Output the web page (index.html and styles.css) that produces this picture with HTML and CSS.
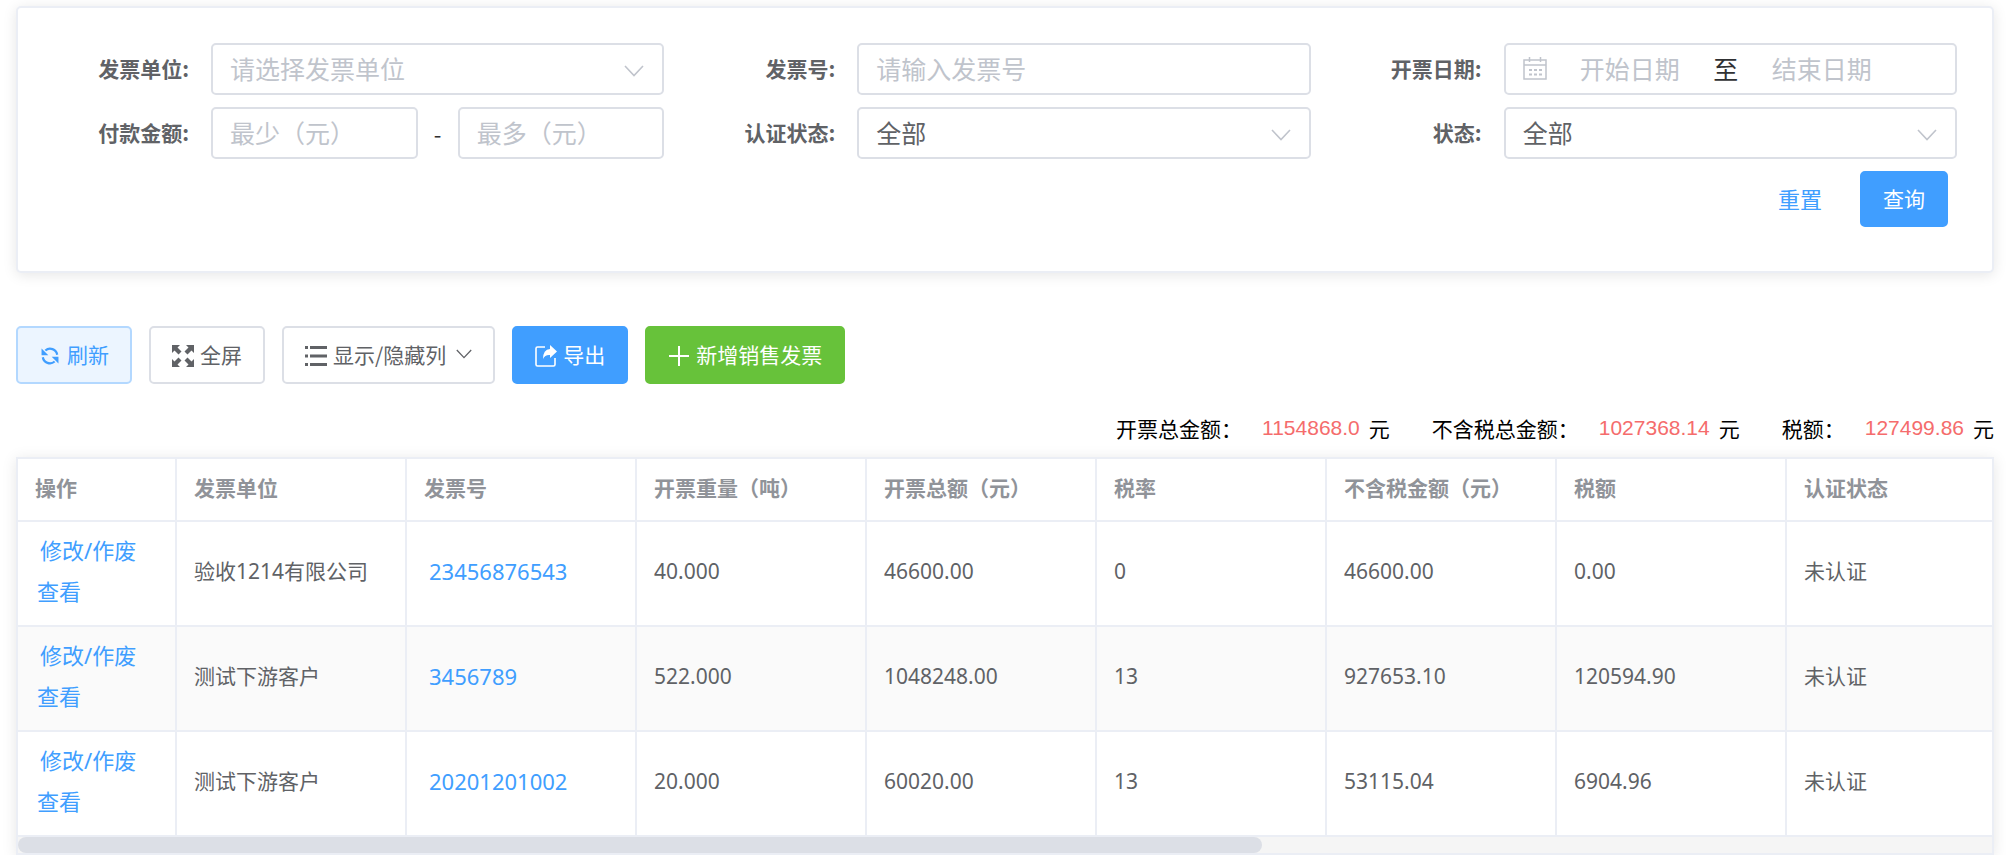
FILE: index.html
```html
<!DOCTYPE html>
<html lang="zh-CN">
<head>
<meta charset="utf-8">
<title>销售发票</title>
<link rel="stylesheet" href="styles.css">
</head>
<body>
<svg class="sprite" aria-hidden="true">
  <symbol id="chevron" viewBox="0 0 20 12"><path d="M1 1l9 9.500 9-9.500" fill="none" stroke="currentColor" stroke-width="1.600"/></symbol>
</svg>

<form class="card filters">
  <div class="field">
    <label class="label" for="company">发票单位:</label>
    <div class="control select">
      <select class="box placeholder" id="company"><option>请选择发票单位</option></select>
      <svg class="arrow"><use href="#chevron"/></svg>
    </div>
  </div>
  <div class="field">
    <label class="label" for="number">发票号:</label>
    <div class="control"><input class="box" id="number" type="text" placeholder="请输入发票号"></div>
  </div>
  <div class="field">
    <label class="label" for="date-start">开票日期:</label>
    <div class="control box date-range">
      <svg class="calendar" viewBox="0 0 24 24" fill="none" stroke="currentColor" stroke-width="1.500"><path d="M1 4h22v19H1zM1 9h22M6.500 1v5M17.500 1v5"/><path d="M6 14h3m2 0h3m2 0h3M6 18.500h3m2 0h3m2 0h3" stroke-width="2"/></svg>
      <input class="date" id="date-start" type="text" placeholder="开始日期">
      <span class="to">至</span>
      <input class="date" type="text" placeholder="结束日期" aria-label="结束日期">
    </div>
  </div>
  <div class="field">
    <label class="label" for="amount-min">付款金额:</label>
    <div class="control amount">
      <input class="box" id="amount-min" type="text" placeholder="最少（元）">
      <span class="dash">-</span>
      <input class="box" type="text" placeholder="最多（元）" aria-label="最多（元）">
    </div>
  </div>
  <div class="field">
    <label class="label" for="auth">认证状态:</label>
    <div class="control select">
      <select class="box" id="auth"><option>全部</option></select>
      <svg class="arrow"><use href="#chevron"/></svg>
    </div>
  </div>
  <div class="field">
    <label class="label" for="status">状态:</label>
    <div class="control select">
      <select class="box" id="status"><option>全部</option></select>
      <svg class="arrow"><use href="#chevron"/></svg>
    </div>
  </div>
  <div class="actions">
    <button class="text-button" type="reset">重置</button>
    <button class="button primary" type="button">查询</button>
  </div>
</form>

<div class="toolbar">
  <button class="button plain" type="button">
    <svg class="icon" viewBox="-2 -2 26 26" fill="none" stroke="currentColor" stroke-width="2.600"><path d="M5.500 4.500A8.500 8.500 0 0 1 19.500 9.500M16.500 17.500A8.500 8.500 0 0 1 2.500 12.500"/><path d="M1 2v8h8zM21 20v-8h-8z" fill="currentColor" stroke="none"/></svg>
    刷新
  </button>
  <button class="button" type="button">
    <svg class="icon" viewBox="0 0 22 22" fill="currentColor"><path d="M0 0h8L5.500 2.500 9.500 6.500 6.500 9.500 2.500 5.500 0 8zM22 0v8l-2.500-2.500-4 4-3-3 4-4L14 0zM0 22v-8l2.500 2.500 4-4 3 3-4 4L8 22zM22 22h-8l2.500-2.500-4-4 3-3 4 4L22 14z"/></svg>
    全屏
  </button>
  <button class="button" type="button">
    <svg class="icon" viewBox="0 0 22 22" fill="currentColor"><path d="M0 1h3v3H0zM5 1h17v3H5zM0 9.500h3v3H0zM5 9.500h17v3H5zM0 18h3v3H0zM5 18h17v3H5z"/></svg>
    显示/隐藏列
    <svg class="caret"><use href="#chevron"/></svg>
  </button>
  <button class="button primary" type="button">
    <svg class="icon" viewBox="0 0 22 22" fill="none" stroke="currentColor" stroke-width="1.600"><path d="M10 2H2.500Q1 2 1 3.500v16Q1 21 2.500 21h16q1.500 0 1.500-1.500V13"/><path d="M15 0l7 6.500-7 6.500V10q-5-.5-7 4 0-9.500 7-10z" fill="currentColor" stroke="none"/></svg>
    导出
  </button>
  <button class="button success" type="button">
    <svg class="icon" viewBox="0 0 22 22" stroke="currentColor" stroke-width="2"><path d="M1 11h20M11 1v20"/></svg>
    新增销售发票
  </button>
</div>

<div class="totals">
  <div class="total"><span class="total-label">开票总金额：</span><span class="value">1154868.0</span><span>元</span></div>
  <div class="total"><span class="total-label">不含税总金额：</span><span class="value">1027368.14</span><span>元</span></div>
  <div class="total"><span class="total-label">税额：</span><span class="value">127499.86</span><span>元</span></div>
</div>

<div class="card table-card">
  <table class="table">
    <colgroup><col class="col-action"><col class="col"><col class="col"><col class="col"><col class="col"><col class="col"><col class="col"><col class="col"><col></colgroup>
    <thead>
      <tr><th>操作</th><th>发票单位</th><th>发票号</th><th>开票重量（吨）</th><th>开票总额（元）</th><th>税率</th><th>不含税金额（元）</th><th>税额</th><th>认证状态</th></tr>
    </thead>
    <tbody>
      <tr>
        <td><a class="link edit" href="#">修改/作废</a><a class="link view" href="#">查看</a></td>
        <td>验收1214有限公司</td><td><a class="link number" href="#">23456876543</a></td><td>40.000</td><td>46600.00</td><td>0</td><td>46600.00</td><td>0.00</td><td>未认证</td>
      </tr>
      <tr>
        <td><a class="link edit" href="#">修改/作废</a><a class="link view" href="#">查看</a></td>
        <td>测试下游客户</td><td><a class="link number" href="#">3456789</a></td><td>522.000</td><td>1048248.00</td><td>13</td><td>927653.10</td><td>120594.90</td><td>未认证</td>
      </tr>
      <tr>
        <td><a class="link edit" href="#">修改/作废</a><a class="link view" href="#">查看</a></td>
        <td>测试下游客户</td><td><a class="link number" href="#">20201201002</a></td><td>20.000</td><td>60020.00</td><td>13</td><td>53115.04</td><td>6904.96</td><td>未认证</td>
      </tr>
    </tbody>
  </table>
  <div class="track"><div class="thumb"></div></div>
</div>
</body>
</html>
```
FILE: styles.css
```css
* { box-sizing: border-box; }

body {
  margin: 0;
  padding: 6px 12px 0 16px;
  background: #fff;
  color: #606266;
  font-family: "Noto Sans CJK SC", sans-serif;
  font-size: 22px;
  line-height: 32px;
}

button, input, select { font: inherit; color: inherit; margin: 0; }

.sprite { display: none; }

.card {
  border: 2px solid #ebeef5;
  border-radius: 5px;
  background: #fff;
  box-shadow: 0 2px 14px rgba(0, 0, 0, 0.1);
}

/* Filters */
.filters {
  display: grid;
  grid-template-columns: repeat(3, 1fr);
  row-gap: 12px;
  padding: 35px 35px 44px 0;
}

.field { display: flex; align-items: center; min-width: 0; }

.label {
  flex: 0 0 193px;
  padding: 0 22px 3px 0;
  font-size: 21px;
  font-weight: 700;
  text-align: right;
}

.control { position: relative; flex: 1; min-width: 0; }

.box {
  display: block;
  width: 100%;
  height: 52px;
  padding: 0 17px 2px;
  border: 2px solid #dcdfe6;
  border-radius: 5px;
  background: #fff;
  font-size: 25px;
  outline: none;
}

select.box { appearance: none; }

.box.placeholder { color: #c0c4cc; }

::placeholder { color: #c0c4cc; opacity: 1; }

.arrow {
  position: absolute;
  top: 22px;
  right: 20px;
  width: 20px;
  height: 12px;
  color: #c0c4cc;
  pointer-events: none;
}

.date-range { display: flex; align-items: center; }

.calendar { flex: none; width: 24px; height: 24px; margin-right: 4px; color: #c0c4cc; }

.date {
  width: 158px;
  padding: 0;
  border: 0;
  background: none;
  text-align: center;
  outline: none;
}

.to { width: 34px; color: #303133; text-align: center; }

.amount { display: flex; align-items: center; }

.amount .box { flex: 1; min-width: 0; }

.dash { width: 40px; text-align: center; color: #303133; }

.actions {
  grid-column: 1 / -1;
  display: flex;
  justify-content: flex-end;
  gap: 38px;
  padding-right: 9px;
}

.text-button {
  padding: 0 0 3px;
  border: 0;
  background: none;
  color: #409eff;
}

/* Buttons */
.button {
  display: flex;
  align-items: center;
  gap: 6px;
  height: 58px;
  padding: 0 21px 3px;
  border: 2px solid #dcdfe6;
  border-radius: 5px;
  background: #fff;
  font-size: 21px;
  white-space: nowrap;
}

.button.plain { border-color: #b3d8ff; background: #ecf5ff; color: #409eff; }
.button.primary { border-color: #409eff; background: #409eff; color: #fff; }
.button.success { border-color: #67c23a; background: #67c23a; color: #fff; }

.actions .button { height: 56px; }

.icon { flex: none; width: 22px; height: 22px; margin-top: 4px; }

.caret { width: 16px; height: 10px; margin-left: 4px; }

.toolbar { display: flex; gap: 17px; margin-top: 53px; }

/* Totals */
.totals {
  display: flex;
  justify-content: flex-end;
  gap: 42px;
  margin: 28px 0 13px;
  color: #000;
  font-size: 21px;
}

.total { display: flex; gap: 9px; }

.total-label { margin-right: 11px; }

.value { color: #f56c6c; font-family: "Liberation Sans", sans-serif; }

/* Table */
.table-card { overflow: hidden; border-radius: 0; }

.table {
  width: 100%;
  table-layout: fixed;
  border-collapse: separate;
  border-spacing: 0;
}

.col-action { width: 159px; }
.col { width: 230px; }

th, td {
  border-right: 2px solid #ebeef5;
  border-bottom: 2px solid #ebeef5;
  text-align: left;
  white-space: nowrap;
}

th:last-child, td:last-child { border-right: 0; }

th { height: 63px; padding: 0 17px 6px; color: #909399; font-size: 21px; font-weight: 700; }

td {
  height: 105px;
  padding: 0 17px 5px;
  font-family: "Noto Sans", "Noto Sans CJK SC", sans-serif;
  font-size: 21px;
}

tbody tr:nth-child(even) { background: #fafafa; }

.link { color: #409eff; font-size: 22px; text-decoration: none; }

.edit, .view { display: block; width: max-content; line-height: 41px; }
.edit { margin-left: 5px; }
.view { margin-left: 2px; }
.number { padding-left: 5px; }

.track { height: 16px; background: #f5f5f5; }

.thumb { width: 63%; height: 100%; border-radius: 8px; background: #dcdfe6; }
```
